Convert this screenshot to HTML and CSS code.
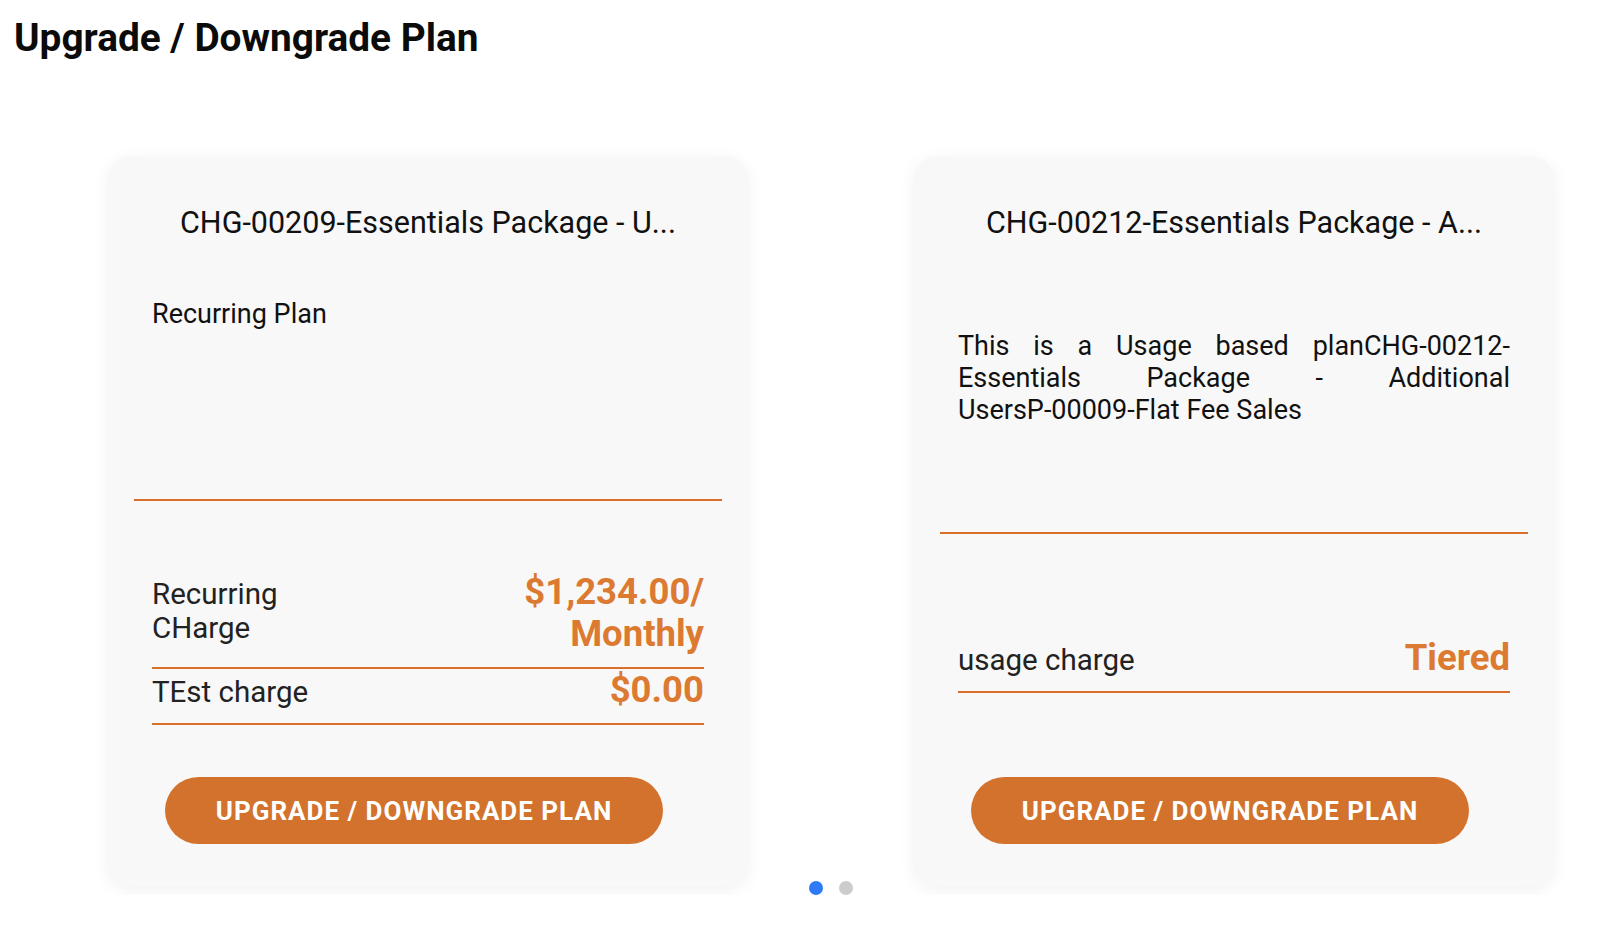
FILE: index.html
```html
<!DOCTYPE html>
<html lang="en">
<head>
<meta charset="utf-8">
<title>Upgrade / Downgrade Plan</title>
<link rel="stylesheet" href="styles.css">
</head>
<body>
<h1 class="page-title">Upgrade / Downgrade Plan</h1>
<div class="carousel">
  <div class="cards">
    <div class="card">
      <div class="card-title">CHG-00209-Essentials Package - U...</div>
      <div class="desc"><div class="desc-text">Recurring Plan</div></div>
      <div class="charges">
        <div class="row">
          <div class="label">Recurring CHarge</div>
          <div class="value">$1,234.00/<wbr>Monthly</div>
        </div>
        <div class="row">
          <div class="label">TEst charge</div>
          <div class="value">$0.00</div>
        </div>
      </div>
      <button class="btn">UPGRADE / DOWNGRADE PLAN</button>
    </div>
    <div class="card">
      <div class="card-title">CHG-00212-Essentials Package - A...</div>
      <div class="desc"><div class="desc-text"><br>This is a Usage based planCHG-00212-Essentials Package - Additional <span class="nowrap">UsersP-00009-Flat</span> Fee Sales</div></div>
      <div class="charges">
        <div class="row">
          <div class="label">usage charge</div>
          <div class="value">Tiered</div>
        </div>
      </div>
      <button class="btn">UPGRADE / DOWNGRADE PLAN</button>
    </div>
  </div>
  <div class="dots">
    <span class="dot dot-active"></span>
    <span class="dot"></span>
  </div>
</div>
</body>
</html>
```
FILE: styles.css
```css
html, body {
  margin: 0;
  padding: 0;
  background: #ffffff;
}
body {
  font-family: Roboto, "Liberation Sans", Arial, sans-serif;
  color: #111;
}
.page-title {
  margin: 0;
  padding: 16px 14px 0;
  font-size: 38.8px;
  line-height: 44px;
  font-weight: 700;
  color: #0b0b0b;
}
.carousel {
  width: 1446px;
  margin: 96px 0 0 108px;
}
.cards {
  display: flex;
  gap: 166px;
}
.card {
  width: 640px;
  height: 730px;
  box-sizing: border-box;
  padding: 49px 26px 42px;
  background: #f8f8f8;
  border-radius: 23px;
  box-shadow: 0 4px 18px rgba(0, 0, 0, 0.06);
  display: flex;
  flex-direction: column;
}
.card-title {
  font-size: 30.5px;
  line-height: 36px;
  text-align: center;
  color: #111;
  margin-bottom: 57px;
}
.desc {
  padding: 0 18px 106px;
  border-bottom: 2px solid #d8702c;
}
.desc-text {
  min-height: 95px;
  font-size: 27px;
  line-height: 32px;
  text-align: justify;
  color: #111;
}
.nowrap {
  white-space: nowrap;
}
.charges {
  flex: 1;
  display: flex;
  flex-direction: column;
  justify-content: center;
  padding: 18px 18px 0;
}
.row {
  display: flex;
  justify-content: space-between;
  align-items: baseline;
  padding: 0 0 12px;
  border-bottom: 2px solid #d8702c;
}
.label {
  max-width: 205px;
  font-size: 29.5px;
  line-height: 34px;
  color: #222;
}
.value {
  max-width: 280px;
  font-size: 36.5px;
  line-height: 42px;
  font-weight: 700;
  color: #db7a30;
  text-align: right;
}
.btn {
  align-self: flex-start;
  margin-left: 31px;
  width: 498px;
  height: 67px;
  border: none;
  border-radius: 34px;
  background: #d3722c;
  color: #ffffff;
  font-family: Roboto, "Liberation Sans", Arial, sans-serif;
  font-size: 26px;
  font-weight: 700;
  letter-spacing: 1px;
  padding: 0;
  cursor: pointer;
}
.dots {
  display: flex;
  justify-content: center;
  gap: 16px;
  margin-top: -5px;
}
.dot {
  width: 14px;
  height: 14px;
  border-radius: 50%;
  background: #cccccc;
}
.dot-active {
  background: #2f7af6;
}
```
